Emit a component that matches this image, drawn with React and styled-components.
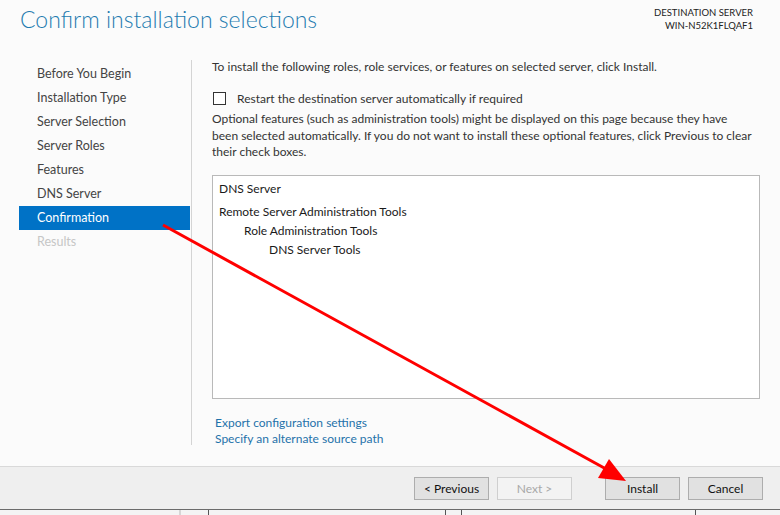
import React from "react";
import styled, { createGlobalStyle } from "styled-components";

const GlobalStyle = createGlobalStyle`
  html, body {
    margin: 0;
    padding: 0;
    background: #fbfbfb;
  }
  body {
    font-family: "Lato", "Open Sans", sans-serif;
    font-size: 12px;
    color: #333;
  }
`;

const Page = styled.div`
  position: relative;
  width: 780px;
  height: 515px;
  overflow: hidden;
  display: flex;
  flex-direction: column;
  background: #fbfbfb;
`;

const Header = styled.div`
  height: 60px;
  display: flex;
  justify-content: space-between;
  align-items: flex-start;
  padding: 0 27px 0 20px;
  flex-shrink: 0;
`;

const Title = styled.h1`
  margin: 5px 0 0;
  font-family: "Lato", sans-serif;
  font-weight: 300;
  font-size: 23px;
  color: #1f7bb0;
`;

const Destination = styled.div`
  margin-top: 6px;
  text-align: right;
  font-size: 9.5px;
  line-height: 13px;
  color: #222;
`;

const Main = styled.div`
  height: 406px;
  display: flex;
  flex-shrink: 0;
`;

const Nav = styled.div`
  width: 173px;
  height: 385px;
  margin-left: 19px;
  padding-top: 2px;
  box-sizing: border-box;
  border-right: 1px solid #d4d4d4;
  display: flex;
  flex-direction: column;
`;

const NavItem = styled.div`
  width: 171px;
  height: 24px;
  line-height: 24px;
  padding-left: 18px;
  box-sizing: border-box;
  font-size: 12.5px;
  color: ${(p) => (p.$active ? "#fff" : p.$disabled ? "#c6c6c6" : "#444")};
  background: ${(p) => (p.$active ? "#0072c6" : "transparent")};
`;

const Content = styled.div`
  flex: 1;
  padding: 0 20px 0 20px;
  display: flex;
  flex-direction: column;
`;

const Intro = styled.div`
  height: 14px;
  line-height: 14px;
  white-space: nowrap;
`;

const CheckRow = styled.label`
  margin-top: 17px;
  display: flex;
  align-items: center;
  gap: 11px;
  height: 14px;
  white-space: nowrap;
`;

const CheckBox = styled.span`
  width: 11px;
  height: 11px;
  margin-left: 1px;
  border: 1px solid #333;
  background: #fff;
  flex-shrink: 0;
`;

const Note = styled.p`
  margin: 6px 0 0;
  line-height: 16.5px;
  white-space: nowrap;
`;

const List = styled.div`
  margin-top: 14px;
  height: 224px;
  box-sizing: border-box;
  border: 1px solid #b9b9b9;
  background: #fff;
  padding: 3px 6px;
`;

const ListItem = styled.div`
  height: 19px;
  line-height: 19px;
  padding-left: ${(p) => p.$level * 25}px;
  color: #1a1a1a;
  margin-top: ${(p) => (p.$gap ? "4px" : "0")};
`;

const Links = styled.div`
  margin-top: 16px;
  padding-left: 3px;
  display: flex;
  flex-direction: column;
`;

const Link = styled.a`
  color: #1f72aa;
  line-height: 16px;
  text-decoration: none;
  cursor: pointer;
`;

const Footer = styled.div`
  height: 43px;
  flex-shrink: 0;
  box-sizing: border-box;
  border-top: 1px solid #d9d9d9;
  background: #efefef;
  display: flex;
  justify-content: flex-end;
  align-items: flex-start;
  padding: 10px 17px 0 0;
`;

const Button = styled.button`
  width: 75px;
  height: 23px;
  box-sizing: border-box;
  border: 1px solid ${(p) => (p.disabled ? "#cfcfcf" : "#adadad")};
  background: ${(p) => (p.disabled ? "#f3f3f3" : "#e1e1e1")};
  color: ${(p) => (p.disabled ? "#a8a8a8" : "#111")};
  font-family: inherit;
  font-size: 12px;
  padding: 0;
  margin-left: ${(p) => p.$gap || 0}px;
`;

const Strip = styled.div`
  flex: 1;
  border-top: 1px solid #6b6b6b;
  background: #f4f4f4;
  display: grid;
  grid-template-columns: 181px 28px 237px 16px 234px 1fr;
`;

const StripCell = styled.div`
  border-right: ${(p) => p.$line || "none"};
`;

const Arrow = styled.svg`
  position: absolute;
  left: 0;
  top: 0;
  pointer-events: none;
`;

const steps = [
  "Before You Begin",
  "Installation Type",
  "Server Selection",
  "Server Roles",
  "Features",
  "DNS Server",
  "Confirmation",
  "Results",
];

export default function App() {
  return (
    <Page>
      <GlobalStyle />
      <Header>
        <Title>Confirm installation selections</Title>
        <Destination>
          DESTINATION SERVER
          <br />
          WIN-N52K1FLQAF1
        </Destination>
      </Header>
      <Main>
        <Nav>
          {steps.map((s) => (
            <NavItem
              key={s}
              $active={s === "Confirmation"}
              $disabled={s === "Results"}
            >
              {s}
            </NavItem>
          ))}
        </Nav>
        <Content>
          <Intro>
            To install the following roles, role services, or features on
            selected server, click Install.
          </Intro>
          <CheckRow>
            <CheckBox />
            Restart the destination server automatically if required
          </CheckRow>
          <Note>
            Optional features (such as administration tools) might be displayed
            on this page because they have
            <br />
            been selected automatically. If you do not want to install these
            optional features, click Previous to clear
            <br />
            their check boxes.
          </Note>
          <List>
            <ListItem $level={0}>DNS Server</ListItem>
            <ListItem $level={0} $gap>
              Remote Server Administration Tools
            </ListItem>
            <ListItem $level={1}>Role Administration Tools</ListItem>
            <ListItem $level={2}>DNS Server Tools</ListItem>
          </List>
          <Links>
            <Link>Export configuration settings</Link>
            <Link>Specify an alternate source path</Link>
          </Links>
        </Content>
      </Main>
      <Footer>
        <Button>&lt; Previous</Button>
        <Button disabled $gap={8}>
          Next &gt;
        </Button>
        <Button $gap={33}>Install</Button>
        <Button $gap={8}>Cancel</Button>
      </Footer>
      <Strip>
        <StripCell $line="2px solid #d6d6d6" />
        <StripCell $line="1px solid #555" />
        <StripCell $line="1px solid #555" />
        <StripCell $line="1px solid #555" />
        <StripCell $line="1px solid #555" />
        <StripCell />
      </Strip>
      <Arrow width="780" height="515" viewBox="0 0 780 515">
        <line
          x1="163"
          y1="225"
          x2="606"
          y2="469"
          stroke="#ff0000"
          strokeWidth="3"
        />
        <polygon points="626,481 598,478 609,459" fill="#ff0000" />
      </Arrow>
    </Page>
  );
}
